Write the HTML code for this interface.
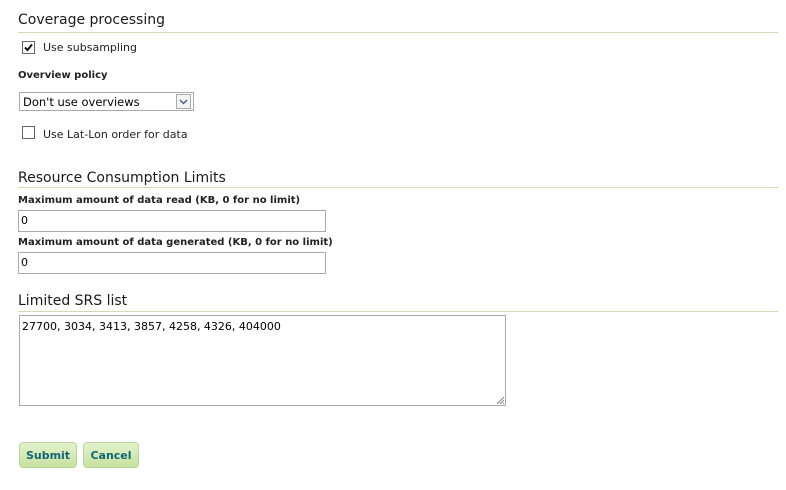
<!DOCTYPE html>
<html><head><meta charset="utf-8">
<style>
body{margin:0;width:786px;height:490px;background:#fff;font-family:Verdana,"DejaVu Sans","Liberation Sans",sans-serif;color:#000;position:relative;overflow:hidden}
.a{position:absolute;white-space:nowrap}
h3{position:absolute;margin:0;font-size:14px;font-weight:normal;color:#1a1a1a;left:18px}
.rule{position:absolute;left:18px;width:760px;height:1px;background:#d4dbb4}
.lbl{font-size:10px;font-weight:bold;color:#222}
.txt{font-size:11px;color:#222}
.cb{position:absolute;width:11px;height:11px;border:1px solid #666;background:#fff}
.inp{position:absolute;border:1px solid #aaa;background:#fff;font-size:11px;padding:3px 2px;box-sizing:border-box}
.btn{position:absolute;top:442px;height:26px;border:1px solid #b9d69a;border-radius:4px;background:linear-gradient(#e4f3cc,#c6e19e);color:#116677;font-weight:bold;font-size:11px;text-align:center;line-height:26px;box-sizing:border-box}
</style></head><body>
<h3 style="top:12px">Coverage processing</h3>
<div class="rule" style="top:32px"></div>
<div class="cb" style="left:22px;top:41px"></div>
<svg class="a" style="left:23px;top:42px" width="11" height="11"><path d="M2 5.5 L4.5 8 L9 2.5" stroke="#111" stroke-width="2" fill="none"/></svg>
<div class="a txt" style="left:43px;top:41px">Use subsampling</div>
<div class="a lbl" style="left:18px;top:70px">Overview policy</div>
<div class="inp" style="left:19px;top:92px;width:175px;height:19px;border-color:#aaa;padding:2px 3px;font-size:11.5px">Don't use overviews</div>
<div class="a" style="left:176px;top:94px;width:15px;height:15px;border:1px solid #aaa;background:#f4f4f4;box-sizing:border-box"></div>
<svg class="a" style="left:178px;top:97px" width="11" height="9"><path d="M2 3 L5.5 6.5 L9 3" stroke="#4d6185" stroke-width="1.5" fill="none"/></svg>
<div class="cb" style="left:22px;top:126px"></div>
<div class="a txt" style="left:43px;top:128px">Use Lat-Lon order for data</div>

<h3 style="top:170px">Resource Consumption Limits</h3>
<div class="rule" style="top:187px"></div>
<div class="a lbl" style="left:18px;top:195px">Maximum amount of data read (KB, 0 for no limit)</div>
<div class="inp" style="left:18px;top:210px;width:308px;height:22px">0</div>
<div class="a lbl" style="left:18px;top:237px">Maximum amount of data generated (KB, 0 for no limit)</div>
<div class="inp" style="left:18px;top:252px;width:308px;height:22px">0</div>

<h3 style="top:293px">Limited SRS list</h3>
<div class="rule" style="top:311px"></div>
<div class="inp" style="left:19px;top:315px;width:487px;height:91px;padding:4px 2px">27700, 3034, 3413, 3857, 4258, 4326, 404000</div>
<svg class="a" style="left:496px;top:396px" width="9" height="9"><path d="M1 8 L8 1 M4 8 L8 4 M7 8 L8 7" stroke="#888" stroke-width="1"/></svg>

<div class="btn" style="left:19px;width:58px">Submit</div>
<div class="btn" style="left:83px;width:56px">Cancel</div>
</body></html>
